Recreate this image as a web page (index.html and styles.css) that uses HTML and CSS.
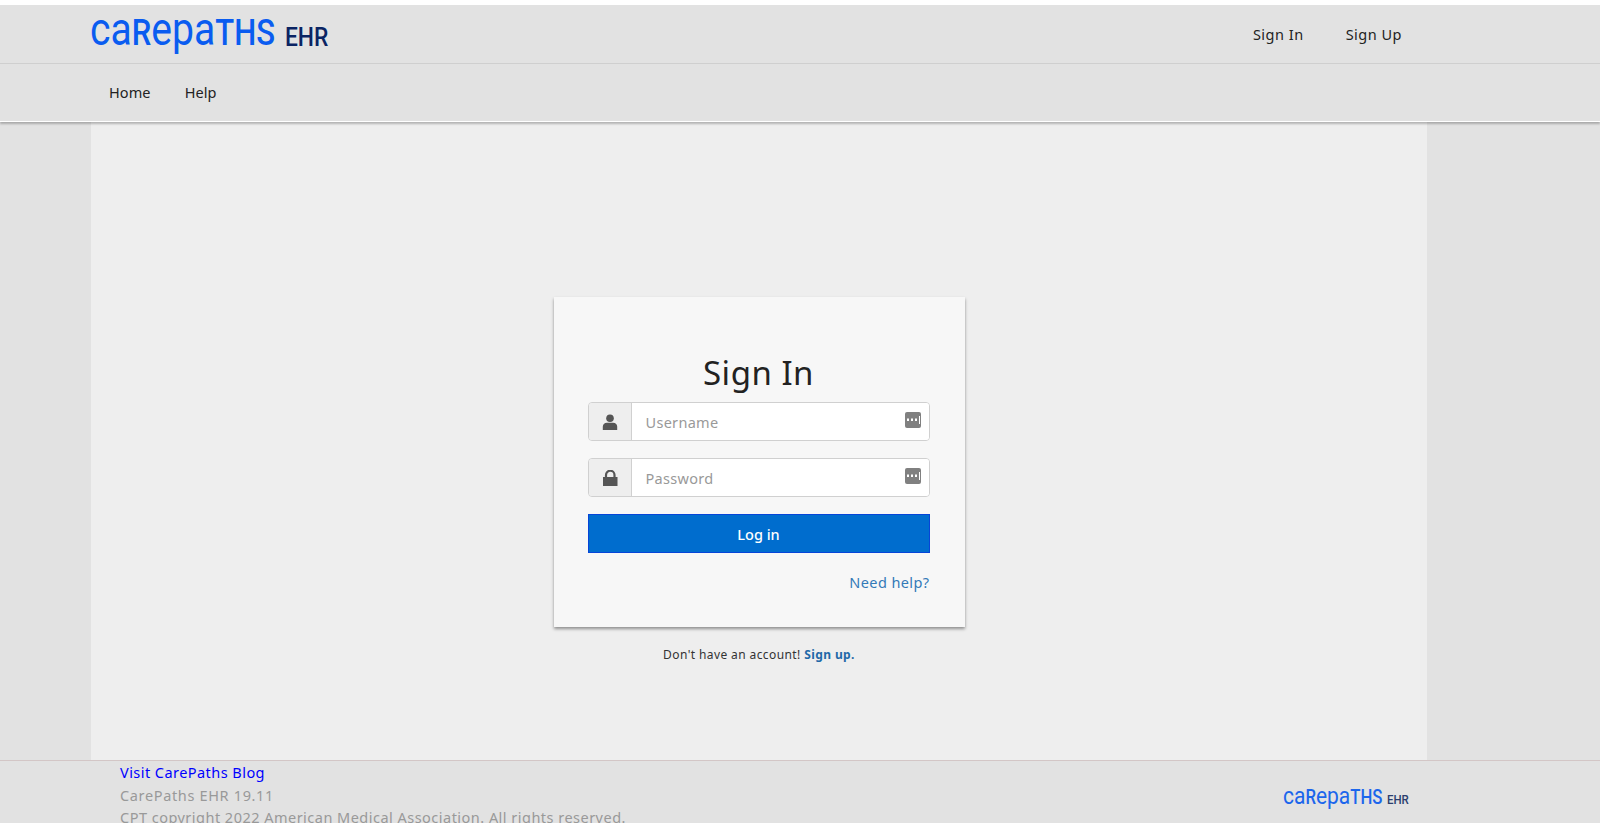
FILE: index.html
```html
<!DOCTYPE html>
<html lang="en">
<head>
<meta charset="utf-8">
<title>CarePaths EHR</title>
<link rel="stylesheet" href="styles.css">
</head>
<body>
<div class="page">
  <header class="topbar">
    <a class="logo" href="#">
      <span class="logo-main"><span class="lc">ca</span>R<span class="lc">epa</span>THS</span>
      <span class="logo-ehr">EHR</span>
    </a>
    <nav class="account-nav">
      <a href="#">Sign In</a>
      <a href="#">Sign Up</a>
    </nav>
  </header>
  <nav class="mainnav">
    <a href="#">Home</a>
    <a href="#">Help</a>
  </nav>
  <main class="content">
    <section class="card">
      <h1 class="card-title">Sign In</h1>
      <div class="field">
        <span class="field-addon">
          <svg width="16" height="16" viewBox="0 0 16 16"><circle cx="8" cy="4.200" r="3.800" fill="#555"/><path d="M0.800 16v-3.200c0-2.600 2-4.100 4-4.100h6.400c2 0 4 1.500 4 4.100V16z" fill="#555"/></svg>
        </span>
        <span class="field-input">
          <span class="placeholder">Username</span>
          <svg class="key-icon" width="16" height="16" viewBox="0 0 16 16"><rect width="16" height="16" rx="2" fill="#808080"/><path d="M2 6.500h2v2.500H2zM6 6.500h2v2.500H6zM10 6.500h2v2.500h-2z" fill="#fff"/><path d="M14 4h1v8h-1z" fill="#fff"/></svg>
        </span>
      </div>
      <div class="field">
        <span class="field-addon">
          <svg width="16" height="16" viewBox="0 0 16 16"><path d="M1 7h14.500v9H1z" fill="#555"/><path d="M4 8V5a4.200 4.200 0 0 1 8.500 0v3" fill="none" stroke="#555" stroke-width="2.200"/></svg>
        </span>
        <span class="field-input">
          <span class="placeholder">Password</span>
          <svg class="key-icon" width="16" height="16" viewBox="0 0 16 16"><rect width="16" height="16" rx="2" fill="#808080"/><path d="M2 6.500h2v2.500H2zM6 6.500h2v2.500H6zM10 6.500h2v2.500h-2z" fill="#fff"/><path d="M14 4h1v8h-1z" fill="#fff"/></svg>
        </span>
      </div>
      <button class="login-btn" type="button">Log in</button>
      <div class="help-row"><a href="#">Need help?</a></div>
    </section>
    <p class="signup-note">Don't have an account! <a href="#">Sign up.</a></p>
  </main>
  <footer class="footer">
    <div class="footer-text">
      <a class="blog-link" href="#">Visit CarePaths Blog</a>
      <div class="version">CarePaths EHR 19.11</div>
      <div>CPT copyright 2022 American Medical Association. All rights reserved.</div>
    </div>
    <div class="logo small">
      <span class="logo-main"><span class="lc">ca</span>R<span class="lc">epa</span>THS</span>
      <span class="logo-ehr">EHR</span>
    </div>
  </footer>
</div>
</body>
</html>
```
FILE: styles.css
```css
* { box-sizing: border-box; }
html, body { margin: 0; padding: 0; height: 100%; overflow: hidden; }
body { background: #fff; font-family: "Noto Sans", sans-serif; color: #222; padding-top: 5px; }
a { text-decoration: none; }

.page { height: 818px; display: flex; flex-direction: column; background: #e2e2e2; overflow: hidden; }

.topbar {
  height: 59px; flex: none; display: flex; justify-content: space-between; align-items: center;
  background: #e2e2e2; border-bottom: 1px solid #cfcfcf; padding: 0 198px 0 90px;
}
.logo { display: flex; align-items: baseline; align-self: flex-start; padding-top: 4px; width: 240px; flex: none; font-family: "Roboto", sans-serif; white-space: nowrap; }
.logo-main { display: block; flex: none; width: 195px; line-height: 40px; font-size: 36.500px; font-weight: 500; color: #0a5cf0; transform: scaleX(.85); transform-origin: left bottom; }
.logo-main .lc { font-size: 46px; font-weight: 400; line-height: 40px; }
.logo-ehr { display: block; flex: none; font-size: 25px; font-weight: 500; color: #0a2463; transform: translateY(1px) scaleX(.91); transform-origin: left bottom; }
.logo.small { width: 127px; padding-top: 23px; }
.logo.small .logo-main { width: 104px; line-height: 24px; font-size: 19.800px; color: #1c66ec; transform: scaleX(.846); }
.logo.small .lc { font-size: 24.800px; line-height: 24px; }
.logo.small .logo-ehr { font-size: 13.500px; color: #2b3e6e; transform: scaleX(.85); }

.account-nav { display: flex; gap: 42px; }
.account-nav a { color: #222; font-size: 14.500px; letter-spacing: 0.5px; }
.mainnav a { color: #222; font-size: 14.500px; letter-spacing: 0.1px; }

.mainnav {
  height: 58px; flex: none; display: flex; align-items: center; gap: 34px; padding: 0 0 2px 109px;
  background: #e2e2e2; border-bottom: 1px solid #fff; box-shadow: 0 2px 2px rgba(0,0,0,.25); position: relative; z-index: 1;
}

.content {
  flex: 1; margin: 0 173px 0 91px; background: #eee; display: flex; flex-direction: column; align-items: center; padding-top: 175px;
}
.card {
  width: 411px; height: 330px; background: #f7f7f7; padding: 52px 35px 0 34px;
  box-shadow: 0 2px 3px rgba(0,0,0,.4);
}
.card-title { margin: 0 0 5px; height: 48px; line-height: 48px; font-size: 33px; font-weight: 400; letter-spacing: 0.5px; text-align: center; color: #222; }
.field { display: flex; height: 39px; margin-bottom: 17px; border: 1px solid #d0d0d0; border-radius: 4px; overflow: hidden; }
.field-addon { width: 43px; flex: none; display: flex; align-items: center; justify-content: center; background: #eee; border-right: 1px solid #d0d0d0; }
.field-input { flex: 1; background: #fff; display: flex; align-items: center; justify-content: space-between; padding: 0 8px 0 14px; }
.placeholder { font-size: 14.500px; letter-spacing: 0.3px; color: #999; }
.key-icon { margin-top: -3px; }
.login-btn {
  display: block; width: 100%; height: 39px; border: 1px solid #0645d8; background: #006dce; color: #fff;
  font: 500 14.500px "Noto Sans", sans-serif; padding: 0;
}
.help-row { text-align: right; margin-top: 18px; font-size: 14.500px; line-height: 22px; letter-spacing: 0.4px; }
.help-row a { color: #337ab7; }
.signup-note { margin: 19px 0 0; font-size: 12px; line-height: 18px; letter-spacing: 0.4px; color: #333; }
.signup-note a { color: #1f69a8; font-weight: 700; }

.footer {
  flex: none; height: 63px; border-top: 1px solid #d3c6c6; display: flex; justify-content: space-between; background: #e2e2e2;
  padding: 0 190px 0 120px; overflow: hidden;
}
.footer-text { font-size: 14.500px; line-height: 22.500px; letter-spacing: 0.48px; color: #999; }
.version { letter-spacing: 0.65px; }
.blog-link { color: #0000ff; letter-spacing: 0.45px; }
```
